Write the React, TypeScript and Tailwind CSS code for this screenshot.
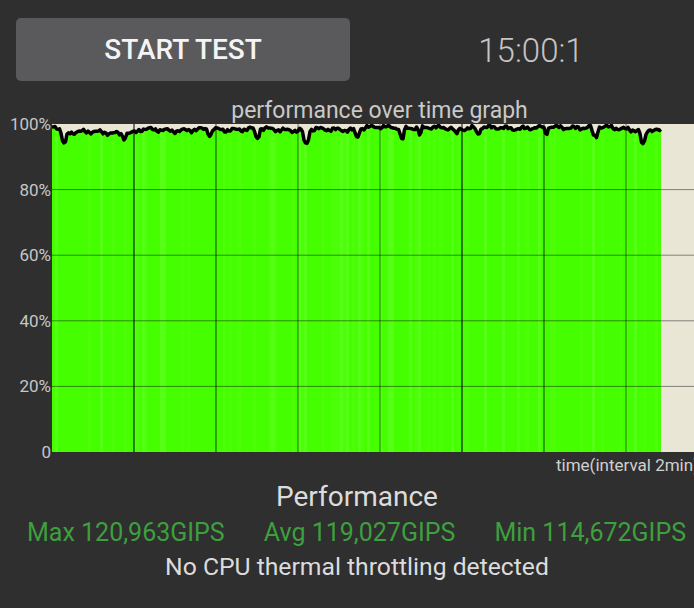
import React from "react";

const CHART_W = 642;
const CHART_H = 328;
const FILL_W = 609;

// baseline of the performance curve (svg coords), interpolated
const anchors: [number, number][] = [
  [0, 1], [6, 3], [18, 8], [82, 9], [88, 6], [150, 6], [190, 5], [260, 6],
  [300, 5], [310, 4], [345, 3], [380, 4], [460, 4], [540, 3], [600, 6], [609, 8],
];

// sharp drops in the curve: [x, depth, half width]
const dips: [number, number, number][] = [
  [12, 13, 3], [72, 4, 2], [158, 6, 2], [205, 9, 2.5], [254, 14, 3], [305, 8, 2.5],
  [350, 11, 2.5], [368, 7, 2], [404, 6, 2], [426, 6, 2], [494, 6, 2], [543, 10, 3], [591, 14, 3],
];

const baseAt = (x: number) => {
  for (let i = 0; i < anchors.length - 1; i++) {
    const [x0, y0] = anchors[i];
    const [x1, y1] = anchors[i + 1];
    if (x >= x0 && x <= x1) return y0 + ((y1 - y0) * (x - x0)) / (x1 - x0);
  }
  return anchors[anchors.length - 1][1];
};

const curveY = (x: number) => {
  let y = baseAt(x);
  y += 1.3 * Math.sin(x * 0.37) + 0.9 * Math.sin(x * 1.13 + 1) + 0.6 * Math.sin(x * 2.7 + 2) + 0.8 * Math.sin(x * 0.11 + 0.5);
  for (const [cx, depth, w] of dips) {
    const d = (x - cx) / w;
    y += depth * Math.exp(-d * d * d * d);
  }
  return Math.max(1.5, y);
};

const points: [number, number][] = [];
for (let x = 0; x <= FILL_W; x += 1.5) points.push([x, curveY(x)]);

const linePath = points.map(([x, y], i) => `${i ? "L" : "M"}${x.toFixed(1)},${y.toFixed(1)}`).join(" ");
const areaPath = `${linePath} L${FILL_W},${CHART_H} L0,${CHART_H} Z`;

const stripeColor = (i: number) => {
  const v = Math.abs(Math.sin(i * 12.9898) * 43758.5453) % 1;
  if (v > 0.88) return "#55ff16";
  if (v > 0.72) return "#4cff09";
  return "#45ff00";
};

const stripes = Array.from({ length: Math.ceil(FILL_W / 3) }, (_, i) => i);
const vLines = [
  { x: 82, o: 0.85 }, { x: 164, o: 0.6 }, { x: 246, o: 0.45 }, { x: 328, o: 0.45 },
  { x: 410, o: 0.85 }, { x: 492, o: 0.6 }, { x: 574, o: 0.45 },
];
const hLines = [1, 2, 3, 4].map((k) => (CHART_H * k) / 5);
const yLabels = ["100%", "80%", "60%", "40%", "20%", "0"];

const PerfChart = () => (
  <svg width={CHART_W} height={CHART_H} viewBox={`0 0 ${CHART_W} ${CHART_H}`} className="block shrink-0">
    <defs>
      <clipPath id="perf-area">
        <path d={areaPath} />
      </clipPath>
    </defs>
    <rect width={CHART_W} height={CHART_H} fill="#e9e6d6" />
    <g clipPath="url(#perf-area)">
      {stripes.map((i) => (
        <rect key={i} x={i * 3} y={0} width={3.2} height={CHART_H} fill={stripeColor(i)} />
      ))}
    </g>
    {hLines.map((y) => (
      <line key={y} x1={0} x2={CHART_W} y1={y} y2={y} stroke="#000" strokeOpacity={0.45} strokeWidth={1} />
    ))}
    {vLines.map(({ x, o }) => (
      <line key={x} x1={x} x2={x} y1={0} y2={CHART_H} stroke="#000" strokeOpacity={o} strokeWidth={1.2} />
    ))}
    <path d={linePath} fill="none" stroke="#000" strokeWidth={3.5} strokeLinejoin="round" />
  </svg>
);

export default function App() {
  return (
    <div className="w-[694px] h-[608px] overflow-hidden bg-[#2f2f2f] font-[Roboto,sans-serif]">
      {/* top bar */}
      <div className="flex items-center pt-[18px] pl-[16px]">
        <button className="w-[334px] h-[63px] rounded-[5px] bg-[#5a5a5c] text-[28px] font-medium text-[#f4f4f4] flex items-center justify-center">
          START TEST
        </button>
        <div className="flex-1 pl-[18px] pt-[2px] text-center text-[33px] font-light text-[#c4c4c4]">15:00:1</div>
      </div>

      {/* graph */}
      <div className="mt-[16px] h-[27px] pl-[65px] text-center text-[23px] leading-[27px] text-[#c9c9c9]">
        performance over time graph
      </div>
      <div className="flex items-start h-[328px]">
        <div className="w-[52px] h-[348px] -mt-[10px] flex flex-col justify-between shrink-0 pr-[1px]">
          {yLabels.map((l) => (
            <div key={l} className="h-[20px] text-right text-[17px] leading-[20px] text-[#c6c6c6]">
              {l}
            </div>
          ))}
        </div>
        <PerfChart />
      </div>
      <div className="mt-[3px] h-[20px] pl-[556px] whitespace-nowrap text-[17px] leading-[20px] text-[#d0d0d0]">
        time(interval 2min)
      </div>

      {/* summary */}
      <div className="mt-[6px] pl-[20px] text-center text-[28px] leading-[32px] text-[#dcdcdc]">Performance</div>
      <div className="mt-[5px] flex justify-between pl-[27px] pr-[8px] text-[25px] leading-[30px] text-[#3e9f3e] whitespace-nowrap">
        <span>Max 120,963GIPS</span>
        <span>Avg 119,027GIPS</span>
        <span>Min 114,672GIPS</span>
      </div>
      <div className="mt-[4px] pl-[20px] text-center text-[24.7px] leading-[30px] text-[#dcdcdc]">
        No CPU thermal throttling detected
      </div>
    </div>
  );
}
